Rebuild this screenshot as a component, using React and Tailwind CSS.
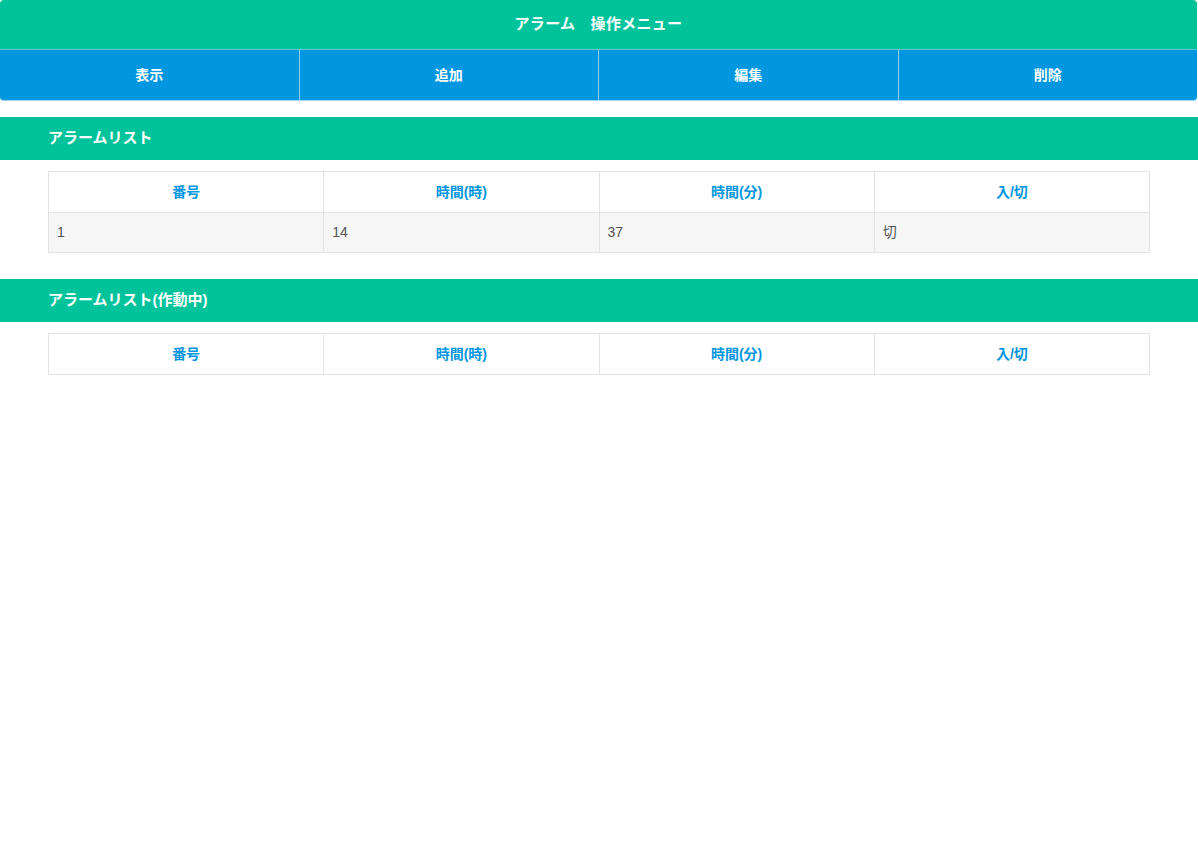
import React from "react";

const cols = ["番号", "時間(時)", "時間(分)", "入/切"];

function Table({ rows }) {
  return (
    <div className="px-12 pt-[11px]">
      <table className="w-full border-collapse table-fixed text-[14px]">
        <thead>
          <tr className="h-[41px]">
            {cols.map((c) => (
              <th key={c} className="border border-[#e3e3e3] font-bold text-[#0096e0] text-center">
                {c}
              </th>
            ))}
          </tr>
        </thead>
        <tbody>
          {rows.map((r, i) => (
            <tr key={i} className="h-[40px] bg-[#f6f6f6]">
              {r.map((v, j) => (
                <td key={j} className="border border-[#e3e3e3] px-2 text-[#555] text-left">
                  {v}
                </td>
              ))}
            </tr>
          ))}
        </tbody>
      </table>
    </div>
  );
}

function SectionHeader({ children }) {
  return (
    <div className="h-[43px] bg-[#00c39c] flex items-center pl-12 text-white font-bold text-[15px]">
      {children}
    </div>
  );
}

export default function App() {
  const font = { fontFamily: '"Liberation Sans", "Noto Sans CJK JP", sans-serif' };
  return (
    <div className="w-[1198px] min-h-[857px] bg-white" style={font}>
      <div className="w-[1197px]">
        <div className="h-[49px] bg-[#00c39c] rounded-t-[4px] flex items-center justify-center text-white font-bold text-[15px] tracking-[0.3px]">
          アラーム　操作メニュー
        </div>
        <div className="flex h-[52px] bg-[#0096e0] border-t border-[#5cc5cf] border-b border-b-[#9fd3ef] rounded-b-[4px]">
          {["表示", "追加", "編集", "削除"].map((b, i) => (
            <div
              key={b}
              className={
                "flex-1 flex items-center justify-center text-white font-bold text-[14px] " +
                (i > 0 ? "border-l border-[#8fcbe9]" : "")
              }
            >
              {b}
            </div>
          ))}
        </div>
      </div>
      <div className="h-[16px]" />
      <SectionHeader>アラームリスト</SectionHeader>
      <Table rows={[["1", "14", "37", "切"]]} />
      <div className="h-[26px]" />
      <SectionHeader>アラームリスト(作動中)</SectionHeader>
      <Table rows={[]} />
    </div>
  );
}
